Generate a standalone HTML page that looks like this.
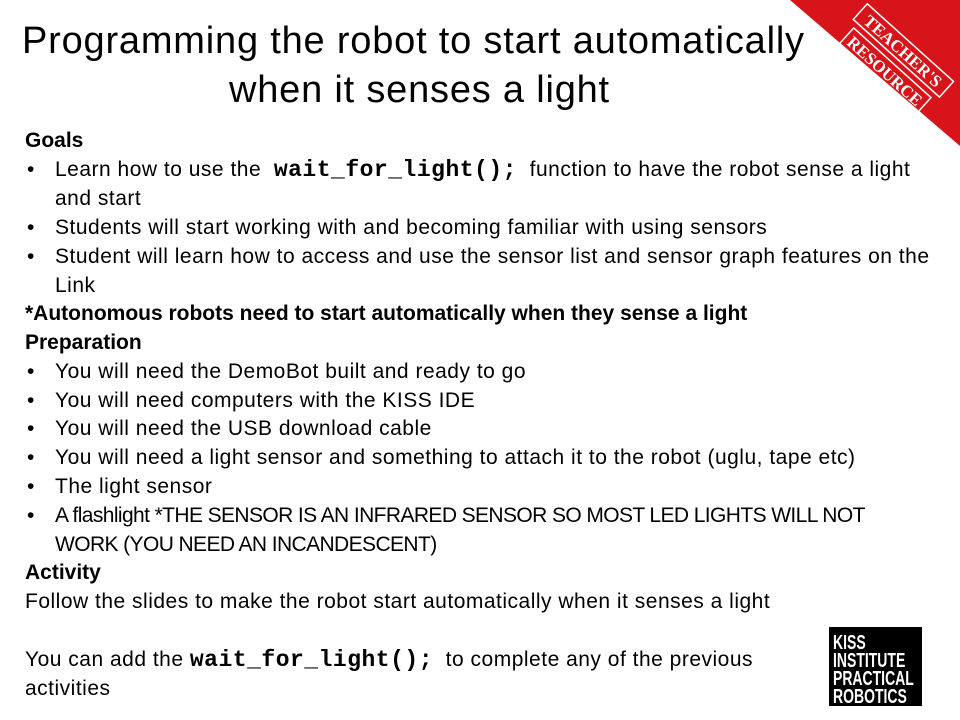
<!DOCTYPE html>
<html><head><meta charset="utf-8"><style>
body{margin:0;width:960px;height:720px;background:#fff;position:relative;overflow:hidden;font-family:"Liberation Sans",sans-serif;color:#000}
.t{position:absolute;white-space:nowrap;font-size:38px;letter-spacing:0.8px;margin-top:2px}
.l{position:absolute;white-space:nowrap;font-size:21px;line-height:29px;letter-spacing:0.5px;margin-top:2px}
.b{left:25px;font-weight:bold;letter-spacing:0}
.bu{left:27px}
.in{left:55px}
.cap{letter-spacing:-0.6px}
code{font-family:"Liberation Mono",monospace;font-weight:bold;font-size:23px}
</style></head><body>
<svg style="position:absolute;left:0;top:0" width="960" height="720">
<polygon points="790,0 960,0 960,146" fill="#d7141a"/>
<g transform="translate(893,62) rotate(42)" fill="none" stroke="#fff" stroke-width="1.5">
<rect x="-58" y="-26" width="116" height="21"/>
<rect x="-52" y="1" width="104" height="21"/>
</g>
<g transform="translate(893,62) rotate(42)" fill="#fff" font-family="Liberation Serif,serif" font-weight="bold" font-size="17" text-anchor="middle">
<text x="0" y="-9">TEACHER'S</text>
<text x="0" y="18">RESOURCE</text>
</g>
<rect x="829" y="627" width="93" height="79" fill="#000"/>
<g fill="#fff" font-family="Liberation Sans,sans-serif" font-weight="bold" font-size="20" transform="scale(0.7,1)">
<text x="1190" y="649">KISS</text>
<text x="1190" y="667">INSTITUTE</text>
<text x="1190" y="685">PRACTICAL</text>
<text x="1190" y="703">ROBOTICS</text>
</g>
</svg>
<div class="t" style="left:22px;top:18px">Programming the robot to start automatically</div>
<div class="t" style="left:229px;top:67px">when it senses a light</div>
<div class="l b" style="top:124px">Goals</div>
<div class="l bu" style="top:153px">•</div><div class="l in" style="top:153px">Learn how to use the &nbsp;<code>wait_for_light();</code>&nbsp; function to have the robot sense a light</div>
<div class="l in" style="top:182px">and start</div>
<div class="l bu" style="top:211px">•</div><div class="l in" style="top:211px">Students will start working with and becoming familiar with using sensors</div>
<div class="l bu" style="top:240px">•</div><div class="l in" style="top:240px">Student will learn how to access and use the sensor list and sensor graph features on the</div>
<div class="l in" style="top:269px">Link</div>
<div class="l b" style="top:297px">*Autonomous robots need to start automatically when they sense a light</div>
<div class="l b" style="top:326px">Preparation</div>
<div class="l bu" style="top:355px">•</div><div class="l in" style="top:355px">You will need the DemoBot built and ready to go</div>
<div class="l bu" style="top:384px">•</div><div class="l in" style="top:384px">You will need computers with the KISS IDE</div>
<div class="l bu" style="top:412px">•</div><div class="l in" style="top:412px">You will need the USB download cable</div>
<div class="l bu" style="top:441px">•</div><div class="l in" style="top:441px">You will need a light sensor and something to attach it to the robot (uglu, tape etc)</div>
<div class="l bu" style="top:470px">•</div><div class="l in" style="top:470px">The light sensor</div>
<div class="l bu" style="top:499px">•</div><div class="l in cap" style="top:499px">A flashlight *THE SENSOR IS AN INFRARED SENSOR SO MOST LED LIGHTS WILL NOT</div>
<div class="l in cap" style="top:528px">WORK (YOU NEED AN INCANDESCENT)</div>
<div class="l b" style="top:556px">Activity</div>
<div class="l" style="left:25px;top:585px">Follow the slides to make the robot start automatically when it senses a light</div>
<div class="l" style="left:25px;top:643px">You can add the <code>wait_for_light();</code>&nbsp; to complete any of the previous</div>
<div class="l" style="left:25px;top:672px">activities</div>
</body></html>
